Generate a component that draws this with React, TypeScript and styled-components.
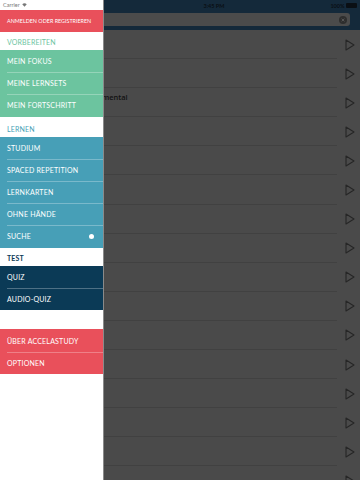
import React from 'react';
import styled, { createGlobalStyle } from 'styled-components';

const GlobalStyle = createGlobalStyle`
  html, body {
    margin: 0;
    padding: 0;
    background: #4a4a4a;
  }
  * {
    box-sizing: border-box;
  }
`;

const DRAWER_WIDTH = '104px';
const ROW_HEIGHT = '22.2px';

const colors = {
  red: '#e9505b',
  green: '#6cc49f',
  blue: '#479fb7',
  navy: '#0b3a56',
};

const lessons = [
  '',
  '',
  'Fundamental',
  '', '', '', '', '', '', '', '', '', '', '', '', '',
];

const App = () => (
  <>
    <GlobalStyle />
    <Screen>
      <Main>
        <TopBar>
          <StatusBar>
            <span />
            <Clock>3:45 PM</Clock>
            <Battery>
              100%
              <BatteryIcon />
            </Battery>
          </StatusBar>
          <SearchRow>
            <SearchField>
              <ClearIcon viewBox="0 0 10 10">
                <circle cx="5" cy="5" r="5" fill="#2e2e2e" />
                <path d="M3.3 3.3 L6.7 6.7 M6.7 3.3 L3.3 6.7" stroke="#5a5a5a" strokeWidth="1.1" />
              </ClearIcon>
            </SearchField>
          </SearchRow>
        </TopBar>
        <List>
          {lessons.map((title, i) => (
            <LessonRow key={i}>
              <LessonInfo>
                <LessonTitle>{title}</LessonTitle>
              </LessonInfo>
              <PlayIcon viewBox="0 0 10 12">
                <path d="M1 1 L9 6 L1 11 Z" fill="none" stroke="#262626" strokeWidth="1.1" strokeLinejoin="round" />
              </PlayIcon>
            </LessonRow>
          ))}
        </List>
      </Main>

      <Drawer>
        <DrawerStatus>
          Carrier
          <WifiIcon viewBox="0 0 10 8">
            <path d="M5 7.5 L0.5 2.6 A6.5 6.5 0 0 1 9.5 2.6 Z" fill="#777" />
          </WifiIcon>
        </DrawerStatus>
        <LoginButton>ANMELDEN ODER REGISTRIEREN</LoginButton>

        <SectionHeader color={colors.green}>VORBEREITEN</SectionHeader>
        <Group bg={colors.green}>
          <Item>MEIN FOKUS</Item>
          <Item>MEINE LERNSETS</Item>
          <Item>MEIN FORTSCHRITT</Item>
        </Group>

        <SectionHeader color={colors.blue} $tall>LERNEN</SectionHeader>
        <Group bg={colors.blue}>
          <Item>STUDIUM</Item>
          <Item>SPACED REPETITION</Item>
          <Item>LERNKARTEN</Item>
          <Item>OHNE HÄNDE</Item>
          <Item>
            SUCHE
            <Dot />
          </Item>
        </Group>

        <SectionHeader color={colors.navy} $bold>TEST</SectionHeader>
        <Group bg={colors.navy}>
          <Item>QUIZ</Item>
          <Item>AUDIO-QUIZ</Item>
        </Group>

        <Spacer />

        <Group bg={colors.red}>
          <Item>ÜBER ACCELASTUDY</Item>
          <Item>OPTIONEN</Item>
        </Group>
      </Drawer>
    </Screen>
  </>
);

const Screen = styled.div`
  position: relative;
  width: 360px;
  height: 480px;
  overflow: hidden;
  font-family: Lato, 'Open Sans', sans-serif;
`;

const Main = styled.div`
  display: flex;
  flex-direction: column;
  height: 100%;
  background: #4a4a4a;
`;

const TopBar = styled.div`
  background: #14293a;
  height: 30px;
  display: flex;
  flex-direction: column;
`;

const StatusBar = styled.div`
  height: 11px;
  display: grid;
  grid-template-columns: 1fr auto 1fr;
  align-items: center;
  padding: 0 3px 0 110px;
  font-size: 5.5px;
  font-weight: 700;
  color: #0a0f14;
`;

const Clock = styled.span`
  margin-left: -30px;
`;

const Battery = styled.span`
  justify-self: end;
  display: flex;
  align-items: center;
  gap: 1.5px;
`;

const BatteryIcon = styled.span`
  display: inline-block;
  width: 11px;
  height: 4.5px;
  background: #0a0f14;
  border-radius: 1px;
`;

const SearchRow = styled.div`
  flex: 1;
  padding: 2px 10px 4px 0;
`;

const SearchField = styled.div`
  height: 13px;
  background: #4b4b4b;
  border-radius: 3px;
  display: flex;
  align-items: center;
  justify-content: flex-end;
  padding-right: 3px;
`;

const ClearIcon = styled.svg`
  width: 8px;
  height: 8px;
`;

const List = styled.div`
  flex: 1;
  display: flex;
  flex-direction: column;
`;

const LessonRow = styled.div`
  height: 29.1px;
  flex-shrink: 0;
  display: flex;
  align-items: center;
  position: relative;
  &::after {
    content: '';
    position: absolute;
    left: 0;
    right: 23px;
    bottom: 0;
    height: 1px;
    background: #414141;
  }
`;

const LessonInfo = styled.div`
  flex: 1;
  padding: 0 0 11px 80px;
`;

const LessonTitle = styled.div`
  font-size: 7.4px;
  font-weight: 600;
  color: #121212;
  font-family: 'Open Sans', sans-serif;
`;

const PlayIcon = styled.svg`
  width: 10px;
  height: 12px;
  margin-right: 5px;
`;

const Drawer = styled.nav`
  position: absolute;
  left: 0;
  top: 0;
  bottom: 0;
  width: ${DRAWER_WIDTH};
  background: #fff;
  display: flex;
  flex-direction: column;
  border-right: 1px solid #8a8a8a;
`;

const DrawerStatus = styled.div`
  height: 10px;
  display: flex;
  align-items: center;
  gap: 2px;
  padding-left: 3px;
  font-size: 5.5px;
  color: #777;
`;

const WifiIcon = styled.svg`
  width: 5px;
  height: 4px;
`;

const LoginButton = styled.div`
  height: 22px;
  background: ${colors.red};
  color: #fff;
  font-size: 5.4px;
  display: flex;
  align-items: center;
  padding-left: 7px;
`;

const SectionHeader = styled.div<{ color: string; $tall?: boolean; $bold?: boolean }>`
  height: ${({ $tall }) => ($tall ? '20px' : '18px')};
  color: ${({ color }) => color};
  font-size: 7px;
  letter-spacing: 0.15px;
  font-weight: ${({ $bold }) => ($bold ? 700 : 400)};
  display: flex;
  align-items: flex-end;
  padding: 0 0 4px 7px;
`;

const Group = styled.div<{ bg: string }>`
  background: ${({ bg }) => bg};
  display: flex;
  flex-direction: column;
`;

const Item = styled.div`
  height: ${ROW_HEIGHT};
  display: flex;
  align-items: center;
  justify-content: space-between;
  padding: 0 9px 0 7px;
  color: #fff;
  font-size: 7px;
  letter-spacing: 0.2px;
  position: relative;
  & + &::before {
    content: '';
    position: absolute;
    top: 0;
    left: 7px;
    right: 0;
    height: 1px;
    background: rgba(255, 255, 255, 0.28);
  }
`;

const Dot = styled.span`
  width: 5px;
  height: 5px;
  border-radius: 50%;
  background: #fff;
`;

const Spacer = styled.div`
  height: 19.6px;
`;

export default App;
